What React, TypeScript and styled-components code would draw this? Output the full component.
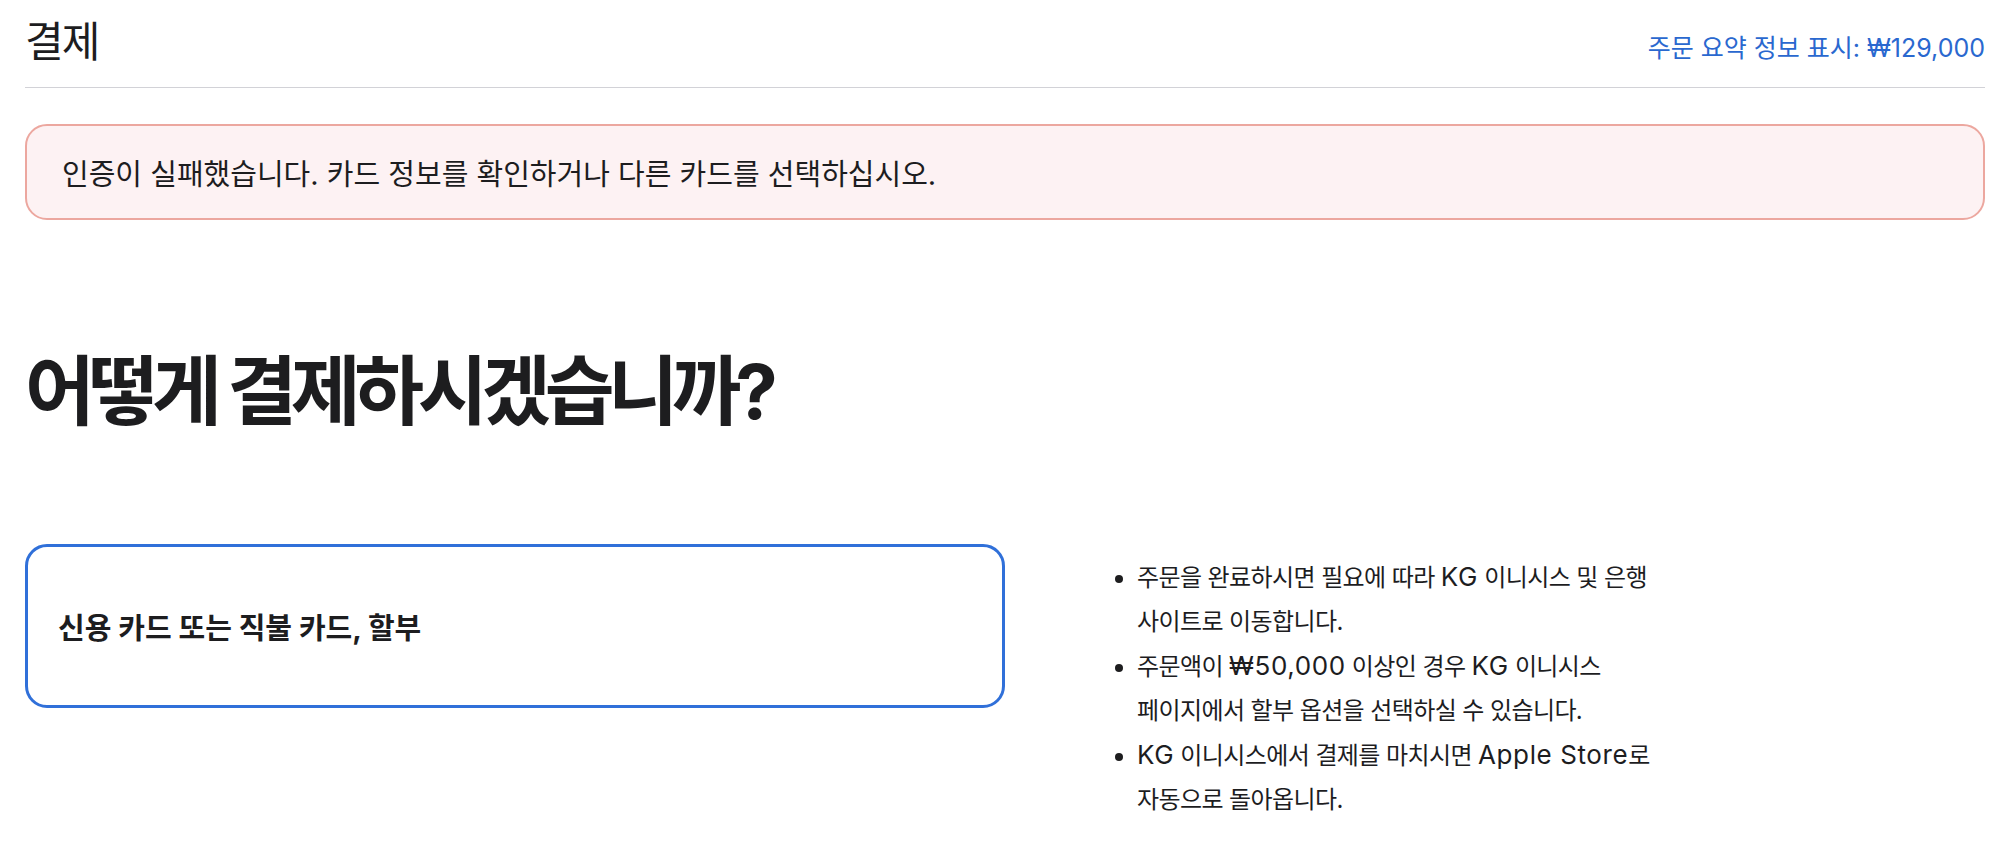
import React from 'react'
import styled, { createGlobalStyle } from 'styled-components'

const GlobalStyle = createGlobalStyle`
    html, body {
        margin: 0;
        padding: 0;
        background: #ffffff;
    }
    body {
        font-family: "Inter", "Noto Sans CJK KR", sans-serif;
        color: #1d1d1f;
    }
`

const Page = styled.div`
    padding: 0 21px 0 25px;
`

const Header = styled.header`
    display: flex;
    justify-content: space-between;
    align-items: baseline;
    height: 88px;
    box-sizing: border-box;
    padding-top: 14px;
    border-bottom: 1px solid #d2d2d7;
`

const Title = styled.h1`
    margin: 0;
    font-size: 42px;
    font-weight: 400;
    line-height: 56px;
    letter-spacing: -2px;
`

const SummaryLink = styled.a`
    font-size: 25px;
    color: #2a68cf;
    text-decoration: none;
`

const Alert = styled.div`
    display: flex;
    align-items: center;
    margin-top: 36px;
    height: 96px;
    box-sizing: border-box;
    padding: 0 35px;
    background: #fdf2f3;
    border: 2px solid #eca79f;
    border-radius: 22px;
    font-size: 29px;
`

const Heading = styled.h2`
    margin: 126px 0 0;
    font-size: 76px;
    font-weight: 700;
    line-height: 90px;
    letter-spacing: -6.4px;
`

const Options = styled.div`
    display: grid;
    grid-template-columns: 980px 1fr;
    margin-top: 108px;
`

const Card = styled.div`
    display: flex;
    align-items: center;
    height: 164px;
    box-sizing: border-box;
    padding: 0 30px;
    border: 3px solid #3070d9;
    border-radius: 22px;
    font-size: 29px;
    font-weight: 700;
`

const Notes = styled.ul`
    margin: 11px 0 0;
    padding: 0 0 0 132px;
    font-size: 24px;
    line-height: 44px;
    letter-spacing: -0.6px;
`

const Note = styled.li`
    padding-left: 0;
`

// latin runs set a touch larger, like the system font next to hangul
const Latin = styled.span`
    font-size: 26px;
    letter-spacing: 0.6px;
`

export default function App() {
    return (
        <Page>
            <GlobalStyle />
            <Header>
                <Title>결제</Title>
                <SummaryLink href="#">주문 요약 정보 표시: ₩129,000</SummaryLink>
            </Header>
            <Alert>인증이 실패했습니다. 카드 정보를 확인하거나 다른 카드를 선택하십시오.</Alert>
            <Heading>어떻게 결제하시겠습니까?</Heading>
            <Options>
                <Card>신용 카드 또는 직불 카드, 할부</Card>
                <Notes>
                    <Note>
                        주문을 완료하시면 필요에 따라 <Latin>KG</Latin> 이니시스 및 은행
                        <br />
                        사이트로 이동합니다.
                    </Note>
                    <Note>
                        주문액이 <Latin>₩50,000</Latin> 이상인 경우 <Latin>KG</Latin> 이니시스
                        <br />
                        페이지에서 할부 옵션을 선택하실 수 있습니다.
                    </Note>
                    <Note>
                        <Latin>KG</Latin> 이니시스에서 결제를 마치시면 <Latin>Apple Store</Latin>로
                        <br />
                        자동으로 돌아옵니다.
                    </Note>
                </Notes>
            </Options>
        </Page>
    )
}
